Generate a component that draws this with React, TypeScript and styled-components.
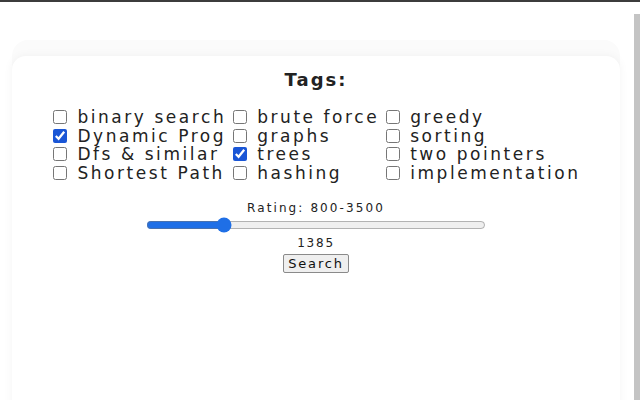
import React, { useState } from 'react';
import styled, { createGlobalStyle } from 'styled-components';

const GlobalStyle = createGlobalStyle`
  html, body {
    margin: 0;
    padding: 0;
    background: #ffffff;
    font-family: "DejaVu Sans", "Noto Sans", sans-serif;
    color: #222;
  }
`;

const TopBar = styled.div`
  height: 2px;
  background: #3c3c3c;
`;

const Scrollbar = styled.div`
  position: fixed;
  top: 14px;
  right: 0;
  bottom: 0;
  width: 6px;
  background: #c4c4c4;
`;

const Page = styled.div`
  padding: 38px 20px 0 12px;
  height: 398px;
  box-sizing: border-box;
  overflow: hidden;
`;

const Backdrop = styled.div`
  background: #fbfbfb;
  border-radius: 16px;
  padding-top: 16px;
  height: 100%;
`;

const Card = styled.div`
  background: #ffffff;
  border-radius: 14px;
  box-shadow: 0 0 10px rgba(0, 0, 0, 0.05);
  height: 100%;
  padding-top: 13px;
  box-sizing: border-box;
  display: flex;
  flex-direction: column;
  align-items: center;
`;

const Title = styled.h2`
  margin: 0 0 18px;
  font-size: 18px;
  font-weight: 600;
  letter-spacing: 2px;
`;

const TagGrid = styled.div`
  display: grid;
  grid-template-columns: repeat(3, auto);
  column-gap: 7px;
  margin-left: 2px;
`;

const TagLabel = styled.label`
  display: flex;
  align-items: center;
  height: 18.5px;
  font-size: 17px;
  letter-spacing: 2.55px;
  white-space: nowrap;
`;

const Box = styled.input`
  width: 14px;
  height: 14px;
  margin: 0 10px 0 0;
  accent-color: #1a56d6;
`;

const Rating = styled.div`
  margin-top: 19px;
  font-size: 12px;
  letter-spacing: 2.1px;
`;

const Slider = styled.input`
  width: 340px;
  margin: 2px 0 3px;
  accent-color: #1f6fe6;
`;

const Value = styled.div`
  font-size: 12px;
  letter-spacing: 1.8px;
`;

const SearchButton = styled.button`
  margin-top: 4px;
  font-family: inherit;
  font-size: 13px;
  letter-spacing: 1.8px;
  padding: 1px 4px;
  background: #efefef;
  border: 1px solid #8a8a8a;
  border-radius: 2px;
  color: #111;
`;

const tags: [string, boolean][] = [
  ['binary search', false],
  ['brute force', false],
  ['greedy', false],
  ['Dynamic Prog', true],
  ['graphs', false],
  ['sorting', false],
  ['Dfs & similar', false],
  ['trees', true],
  ['two pointers', false],
  ['Shortest Path', false],
  ['hashing', false],
  ['implementation', false],
];

export default function App() {
  const [rating, setRating] = useState(1385);
  const [checked, setChecked] = useState(tags.map(([, c]) => c));

  return (
    <>
      <GlobalStyle />
      <TopBar />
      <Scrollbar />
      <Page>
        <Backdrop>
          <Card>
            <Title>Tags:</Title>
            <TagGrid>
              {tags.map(([name], i) => (
                <TagLabel key={name}>
                  <Box
                    type="checkbox"
                    checked={checked[i]}
                    onChange={() => setChecked(checked.map((c, j) => (j === i ? !c : c)))}
                  />
                  {name}
                </TagLabel>
              ))}
            </TagGrid>
            <Rating>Rating: 800-3500</Rating>
            <Slider
              type="range"
              min={800}
              max={3500}
              value={rating}
              onChange={(e) => setRating(Number(e.target.value))}
            />
            <Value>{rating}</Value>
            <SearchButton>Search</SearchButton>
          </Card>
        </Backdrop>
      </Page>
    </>
  );
}
